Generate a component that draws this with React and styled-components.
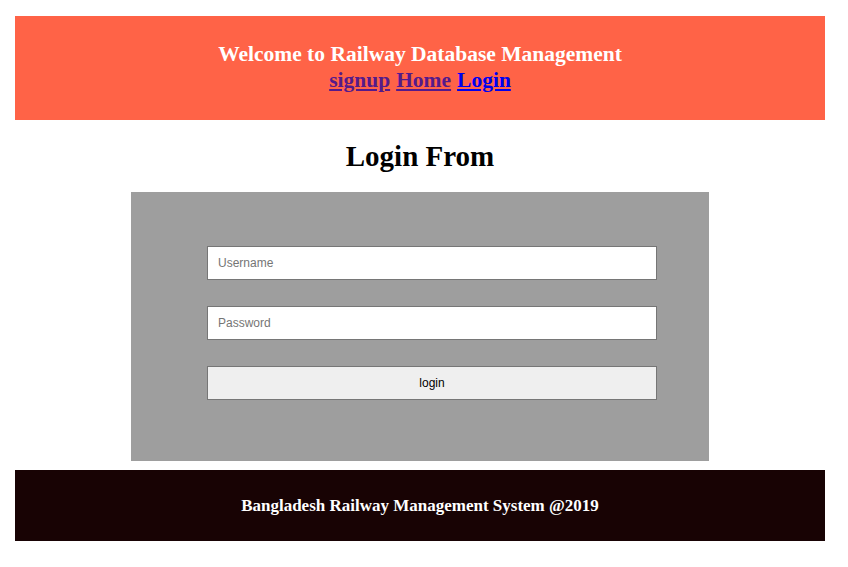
import styled, { createGlobalStyle } from 'styled-components';

const GlobalStyle = createGlobalStyle`
  body {
    margin: 0;
    font-family: "Liberation Serif", "Times New Roman", serif;
    background: #fff;
  }
`;

const Page = styled.div`
  padding: 16px 23px 0 15px;
  display: flex;
  flex-direction: column;
  align-items: stretch;
`;

const Header = styled.header`
  background: #ff6347;
  height: 104px;
  display: flex;
  flex-direction: column;
  align-items: center;
  justify-content: center;
  padding-bottom: 3px;
  box-sizing: border-box;
  color: #fff;
  font-weight: bold;
  font-size: 21.5px;
  line-height: 26px;
`;

const Nav = styled.nav`
  display: flex;
  gap: 6px;
`;

const NavLink = styled.a`
  color: ${(p) => (p.$visited ? '#551a8b' : '#0000ee')};
  text-decoration: underline;
`;

const Title = styled.h2`
  margin: 20px 0 19px;
  text-align: center;
  font-size: 29px;
  line-height: 33px;
`;

const FormBox = styled.form`
  align-self: center;
  width: 578px;
  height: 269px;
  background: #9e9e9e;
  display: flex;
  flex-direction: column;
  align-items: flex-start;
  gap: 26px;
  padding: 54px 0 0 76px;
  box-sizing: border-box;
`;

const Field = styled.input`
  width: 450px;
  height: 34px;
  box-sizing: border-box;
  border: 1px solid #767676;
  background: ${(p) => (p.$button ? '#efefef' : '#fff')};
  padding: 0 10px;
  font-family: "Liberation Sans", Arial, sans-serif;
  font-size: 12px;
  color: #000;
  text-align: ${(p) => (p.$button ? 'center' : 'left')};
  outline: none;

  &::placeholder {
    color: #757575;
  }
`;

const Footer = styled.footer`
  margin-top: 9px;
  height: 71px;
  background: #180304;
  color: #fff;
  display: flex;
  align-items: center;
  justify-content: center;
  font-weight: bold;
  font-size: 17px;
`;

function App() {
  return (
    <Page>
      <GlobalStyle />
      <Header>
        <div>Welcome to Railway Database Management</div>
        <Nav>
          <NavLink href="#" $visited>signup</NavLink>
          <NavLink href="#" $visited>Home</NavLink>
          <NavLink href="#">Login</NavLink>
        </Nav>
      </Header>
      <Title>Login From</Title>
      <FormBox onSubmit={(e) => e.preventDefault()}>
        <Field type="text" placeholder="Username" />
        <Field type="password" placeholder="Password" />
        <Field type="submit" value="login" $button />
      </FormBox>
      <Footer>Bangladesh Railway Management System @2019</Footer>
    </Page>
  );
}

export default App;
